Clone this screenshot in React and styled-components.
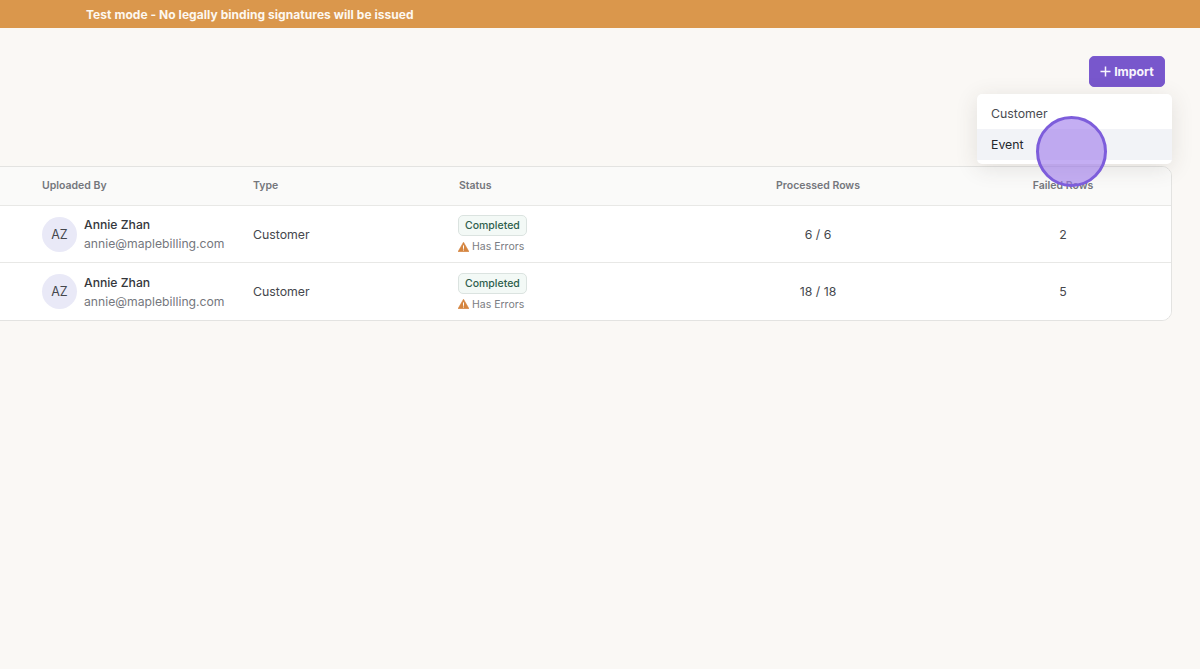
import React from 'react'
import styled, { createGlobalStyle } from 'styled-components'

const Global = createGlobalStyle`
  html, body {
    margin: 0;
    height: 100%;
    overflow: hidden;
    background: #faf8f5;
    font-family: Inter, "Noto Sans", sans-serif;
    color: #2f3136;
  }
  * { box-sizing: border-box; }
`

const Page = styled.div`
  position: relative;
  height: 669px;
  overflow: hidden;
`

const Banner = styled.div`
  height: 28px;
  padding-left: 86px;
  display: flex;
  align-items: center;
  background: #da974c;
  color: #fdf8f0;
  font-size: 12px;
  font-weight: 700;
  letter-spacing: 0.05px;
`

const Toolbar = styled.div`
  position: relative;
  display: flex;
  justify-content: flex-end;
  padding: 28px 35px 0 0;
  height: 138px;
`

const ImportButton = styled.button`
  width: 76px;
  height: 31px;
  padding: 0;
  display: flex;
  align-items: center;
  justify-content: center;
  gap: 3px;
  border: 1px solid #7a5ad0;
  border-radius: 5px;
  background: #7857cc;
  color: #f8f5fd;
  font-family: inherit;
  font-size: 12.3px;
  font-weight: 700;
`

const Menu = styled.div`
  position: absolute;
  top: 66px;
  right: 28px;
  width: 195px;
  height: 70px;
  padding-top: 4px;
  background: #fff;
  border-radius: 5px;
  box-shadow: 0 4px 22px rgba(60, 55, 45, 0.13);
  z-index: 2;
`

const MenuItem = styled.div`
  height: 31px;
  display: flex;
  align-items: center;
  padding-left: 14px;
  font-size: 12.3px;
  color: ${props => props.active ? '#24262b' : '#4a4c52'};
  background: ${props => props.active ? '#f2f3f7' : 'transparent'};
`

const ClickMark = styled.div`
  position: absolute;
  left: 1036px;
  top: 116px;
  width: 71px;
  height: 71px;
  border-radius: 50%;
  border: 3px solid #7d5ddb;
  background: rgba(157, 120, 235, 0.6);
  z-index: 3;
`

const Table = styled.div`
  width: 1184px;
  margin-left: -12px;
  background: #fff;
  border: 1px solid #e3e3e1;
  border-radius: 10px;
  overflow: hidden;
`

const Row = styled.div`
  display: grid;
  grid-template-columns: 53px 211px 206px 223px 272px 218px;
  align-items: center;
  height: ${props => props.head ? '39px' : '57px'};
  padding-bottom: ${props => props.head ? '2px' : '0'};
  background: ${props => props.head ? '#fafaf9' : '#fff'};
  border-bottom: 1px solid #e8e8e6;
  &:last-child { border-bottom: none; }
`

const HeadCell = styled.div`
  font-size: 10.5px;
  font-weight: 600;
  color: #74767c;
  text-align: ${props => props.center ? 'center' : 'left'};
`

const Cell = styled.div`
  font-size: 12.3px;
  color: #45474d;
  text-align: ${props => props.center ? 'center' : 'left'};
`

const User = styled.div`
  display: flex;
  align-items: center;
  gap: 7px;
`

const Avatar = styled.div`
  width: 35px;
  height: 35px;
  border-radius: 50%;
  display: flex;
  align-items: center;
  justify-content: center;
  background: #e9e9f7;
  color: #44464d;
  font-size: 12.5px;
`

const UserName = styled.div`
  font-size: 12.2px;
  line-height: 19px;
  font-weight: 500;
  color: #35373c;
`

const UserMail = styled.div`
  font-size: 12.2px;
  line-height: 19px;
  color: #75777d;
`

const Status = styled.div`
  display: flex;
  flex-direction: column;
  align-items: flex-start;
  gap: 4px;
  margin-left: -1px;
`

const Badge = styled.span`
  height: 21px;
  padding: 0 6px;
  display: flex;
  align-items: center;
  border: 1px solid #dbe3e0;
  border-radius: 5px;
  background: #f3f9f6;
  color: #2f5f4d;
  font-size: 10.5px;
  font-weight: 500;
`

const Warning = styled.div`
  display: flex;
  align-items: center;
  gap: 3px;
  font-size: 10.5px;
  color: #7a7c82;
`

const PlusIcon = () => (
  <svg width="11" height="11" viewBox="0 0 11 11">
    <path d="M5.5 0.5 V10.5 M0.5 5.5 H10.5" stroke="#f8f5fd" strokeWidth="1.5" fill="none" />
  </svg>
)

const WarnIcon = () => (
  <svg width="11" height="10" viewBox="0 0 11 10">
    <path d="M5.5 0.2 L11 9.8 H0 Z" fill="#d5853f" stroke="#d5853f" strokeWidth="0.6" strokeLinejoin="round" />
    <rect x="5" y="3.4" width="1" height="3.4" fill="#fff" />
    <rect x="5" y="7.5" width="1" height="1" fill="#fff" />
  </svg>
)

const rows = [
  { processed: '6 / 6', failed: 2 },
  { processed: '18 / 18', failed: 5 },
]

export default function App() {
  return (
    <Page>
      <Global />
      <Banner>Test mode - No legally binding signatures will be issued</Banner>
      <Toolbar>
        <ImportButton><PlusIcon />Import</ImportButton>
        <Menu>
          <MenuItem>Customer</MenuItem>
          <MenuItem active>Event</MenuItem>
        </Menu>
      </Toolbar>
      <Table>
        <Row head>
          <div />
          <HeadCell>Uploaded By</HeadCell>
          <HeadCell>Type</HeadCell>
          <HeadCell>Status</HeadCell>
          <HeadCell center>Processed Rows</HeadCell>
          <HeadCell center>Failed Rows</HeadCell>
        </Row>
        {rows.map(row => (
          <Row key={row.processed}>
            <div />
            <User>
              <Avatar>AZ</Avatar>
              <div>
                <UserName>Annie Zhan</UserName>
                <UserMail>annie@maplebilling.com</UserMail>
              </div>
            </User>
            <Cell>Customer</Cell>
            <Status>
              <Badge>Completed</Badge>
              <Warning><WarnIcon /> Has Errors</Warning>
            </Status>
            <Cell center>{row.processed}</Cell>
            <Cell center>{row.failed}</Cell>
          </Row>
        ))}
      </Table>
      <ClickMark />
    </Page>
  )
}
